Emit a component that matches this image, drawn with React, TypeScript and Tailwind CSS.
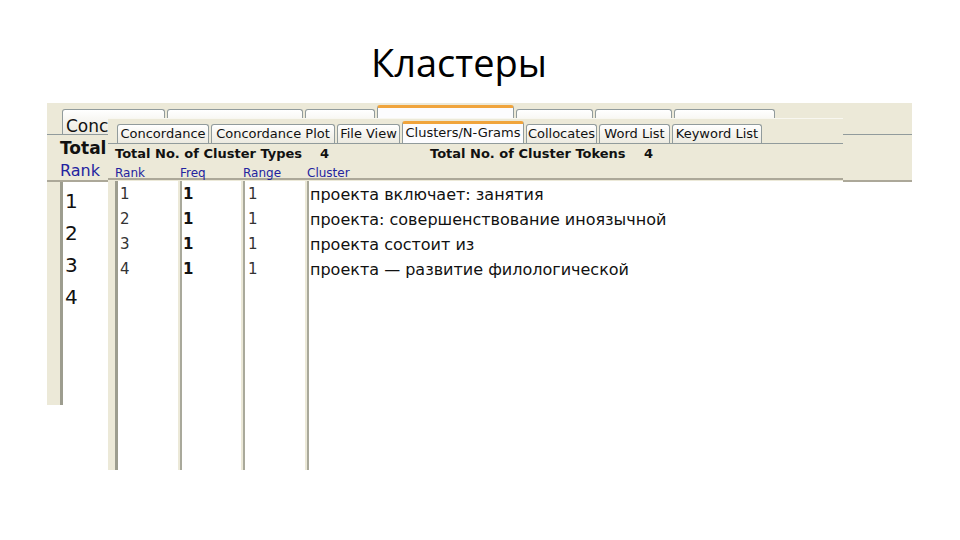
const FONT = { fontFamily: '"DejaVu Sans", Verdana, sans-serif' };

type Tab = { label: string; w: number; active?: boolean };

const frontTabs: Tab[] = [
  { label: "Concordance", w: 92 },
  { label: "Concordance Plot", w: 124 },
  { label: "File View", w: 63 },
  { label: "Clusters/N-Grams", w: 122, active: true },
  { label: "Collocates", w: 71 },
  { label: "Word List", w: 71 },
  { label: "Keyword List", w: 90 },
];

// back screenshot is bigger (~1.3x) and mostly hidden under the front one,
// only the first tab's caption peeks out on the left
const backTabs: Tab[] = [
  { label: "Concordance", w: 103 },
  { label: "", w: 136 },
  { label: "", w: 70 },
  { label: "", w: 137, active: true },
  { label: "", w: 77 },
  { label: "", w: 77 },
  { label: "", w: 101 },
];

const clusters = [
  "проекта включает: занятия",
  "проекта: совершенствование иноязычной",
  "проекта состоит из",
  "проекта — развитие филологической",
];

function TabStrip({ tabs, big }: { tabs: Tab[]; big?: boolean }) {
  return (
    <>
      {tabs.map((t, i) => (
        <div
          key={i}
          style={{ width: t.w }}
          className={`shrink-0 overflow-hidden whitespace-nowrap border border-b-0 rounded-t-[3px] ${
            t.active
              ? `bg-[#fcfcfe] border-[#919b9c] border-t-[3px] border-t-[#f0a43c] ${
                  big ? "h-[29px]" : "h-[22px]"
                }`
              : `bg-gradient-to-b from-white to-[#eceae0] border-[#919b9c] ${
                  big ? "h-[25px]" : "h-[19px]"
                }`
          } ${big ? "text-[17px] leading-[20px] pt-[6px] pl-[3px]" : "text-[13px] leading-[18px] text-center"} text-[#111]`}
        >
          {t.label}
        </div>
      ))}
    </>
  );
}

function BackShot() {
  return (
    <div className="absolute left-[47px] top-[103px] w-[865px]" style={FONT}>
      <div className="bg-[#ece9d8]">
        <div className="h-[32px] flex items-end gap-[2px] pl-[15px] border-b border-[#919b9c]">
          <TabStrip tabs={backTabs} big />
        </div>
        <div className="h-[47px] border-b-2 border-[#aca899] pl-[13px]">
          <div className="h-[26px] pt-[2px] flex items-center text-[17px] font-bold text-[#111] whitespace-nowrap">
            Total No. of Cluster Types
          </div>
          <div className="h-[19px] flex items-center text-[16px] text-[#23239f]">Rank</div>
        </div>
      </div>
      <div className="w-[80px] h-[223px] bg-[#ece9d8] pl-[13px]">
        <div className="h-full bg-white border-l-[3px] border-[#9d9d8f] pt-[3px]">
          {["1", "2", "3", "4"].map((n) => (
            <div key={n} className="h-[32px] flex items-center pl-[2px] text-[20px] text-[#111]">
              {n}
            </div>
          ))}
        </div>
      </div>
    </div>
  );
}

function FrontShot() {
  const cols = "grid grid-cols-[63px_61px_62px_1fr] gap-[2px]";
  return (
    <div
      className="absolute left-[108px] top-[118px] w-[735px] h-[352px] bg-[#ece9d8] border-t border-[#f8f7f0] flex flex-col"
      style={FONT}
    >
      <div className="h-[25px] shrink-0 flex items-end gap-[2px] pl-[9px] border-b border-[#919b9c]">
        <TabStrip tabs={frontTabs} />
      </div>

      <div className="h-[36px] shrink-0 border-b-2 border-[#aca899] pl-[7px]">
        <div className="h-[20px] flex items-center text-[13px] font-bold text-[#111] whitespace-nowrap">
          <span className="w-[205px]">Total No. of Cluster Types</span>
          <span className="w-[110px]">4</span>
          <span className="w-[214px]">Total No. of Cluster Tokens</span>
          <span>4</span>
        </div>
        <div className={`${cols} h-[14px] items-center text-[12px] text-[#23239f]`}>
          <span>Rank</span>
          <span>Freq</span>
          <span>Range</span>
          <span>Cluster</span>
        </div>
      </div>

      <div className={`${cols} flex-1 pl-[7px] pt-[1px]`}>
        <div className="bg-white border-l-[3px] border-[#9d9d8f] pl-[2px] pt-[1px]">
          {["1", "2", "3", "4"].map((n) => (
            <div key={n} className="h-[25px] flex items-center text-[15px] text-[#333]">
              {n}
            </div>
          ))}
        </div>
        <div className="bg-white border-l-2 border-[#a9a99b] pl-px pt-[1px]">
          {clusters.map((_, i) => (
            <div key={i} className="h-[25px] flex items-center text-[15px] font-bold text-[#111]">
              1
            </div>
          ))}
        </div>
        <div className="bg-white border-l-2 border-[#a9a99b] pl-[3px] pt-[1px]">
          {clusters.map((_, i) => (
            <div key={i} className="h-[25px] flex items-center text-[15px] text-[#333]">
              1
            </div>
          ))}
        </div>
        <div className="bg-white border-l-2 border-[#a9a99b] pl-px pt-[1px]">
          {clusters.map((c) => (
            <div key={c} className="h-[25px] flex items-center text-[16px] text-[#111] whitespace-nowrap">
              {c}
            </div>
          ))}
        </div>
      </div>
    </div>
  );
}

export default function App() {
  return (
    <div className="relative w-[960px] h-[540px] bg-white overflow-hidden">
      <h1
        className="pt-[40px] pr-[42px] text-center text-[38px] leading-[44px] text-black"
        style={{ fontFamily: '"Open Sans", "Noto Sans", sans-serif' }}
      >
        Кластеры
      </h1>
      <BackShot />
      <FrontShot />
    </div>
  );
}
